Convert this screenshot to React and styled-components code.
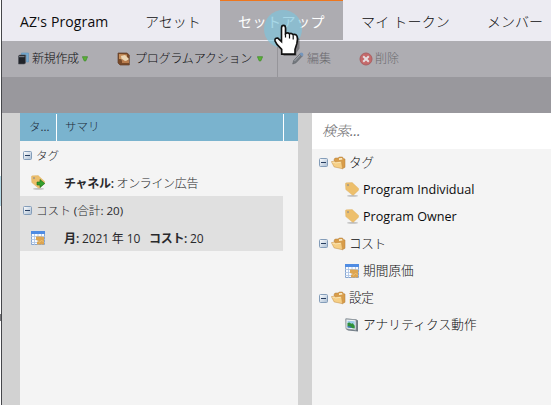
import React from "react";
import styled, { createGlobalStyle } from "styled-components";

const Global = createGlobalStyle`
  * { box-sizing: border-box; }
  body { margin: 0; overflow: hidden; background: #fff; }
  svg { display: block; flex: none; }
`;

const Page = styled.div`
  width: 551px;
  height: 405px;
  display: flex;
  font-family: "Open Sans", "Noto Sans CJK JP", sans-serif;
  color: #171719;
`;
const Edge = styled.div`
  flex: none;
  width: 2px;
  padding: 176px 0 0;
  border-right: 1px solid #46474b;
  background: #fff;
`;
const EdgeMark = styled.div`
  height: ${(p) => p.$h}px;
  margin-bottom: ${(p) => p.$gap || 0}px;
  background: ${(p) => p.$color};
`;
const Main = styled.div`
  width: 549px;
  display: flex;
  flex-direction: column;
`;
const Tabs = styled.nav`
  height: 41px;
  display: flex;
  background: #ecebf2;
`;
const Tab = styled.div`
  position: relative;
  flex: none;
  width: ${(p) => p.$w}px;
  height: 40px;
  padding: 2px 0 0 ${(p) => p.$pad || 18}px;
  line-height: 39px;
  font-size: 14px;
  white-space: nowrap;
  color: ${(p) => (p.$active ? "#fff" : "#0c0c0e")};
  background: ${(p) => (p.$active ? "#adacb1" : "transparent")};
  box-shadow: ${(p) => (p.$active ? "inset 0 1px #ee761d" : "none")};
`;
const Text = styled.span`
  letter-spacing: ${(p) => p.$ls || 0}px;
  font-weight: ${(p) => (p.$bold ? 600 : p.$light ? 300 : 400)};
  white-space: pre;
`;
const Pointer = styled.div`
  position: absolute;
  left: 43px;
  top: 9px;
  z-index: 2;
`;
const Toolbar = styled.div`
  height: 36px;
  display: flex;
  background: #aeadb2;
`;
const Tool = styled.div`
  flex: none;
  width: ${(p) => p.$w}px;
  height: 36px;
  padding: 0 0 1px ${(p) => p.$pad}px;
  display: flex;
  align-items: center;
  gap: ${(p) => p.$gap || 3}px;
  font-size: 12px;
  line-height: 18px;
  white-space: nowrap;
  color: ${(p) => (p.$off ? "#6c6b70" : "#0c0c0e")};
  border-left: ${(p) => (p.$rule ? "1px solid #96959a" : "0")};
`;
const Band = styled.div`
  height: 36px;
  background: #99989d;
`;
const Body = styled.div`
  flex: 1;
  display: flex;
  padding-left: 18px;
  background: #d2d2d2;
`;
const Summary = styled.section`
  width: 278px;
  margin-right: 14px;
  background: #f4f4f4;
`;
const Head = styled.div`
  height: 28px;
  display: flex;
  align-items: stretch;
  padding-top: 1px;
  background: #7ab3ce;
  font-size: 11.5px;
  line-height: 26px;
  color: #1d2c3a;
`;
const HeadCell = styled.div`
  width: ${(p) => p.$w}px;
  padding-left: ${(p) => p.$pad}px;
  border-right: 1px solid #fff;
  white-space: nowrap;
`;
const Group = styled.div`
  width: 263px;
  height: ${(p) => p.$h}px;
  background: ${(p) => (p.$shade ? "#e0e0e0" : "#f4f4f4")};
`;
const GroupRow = styled.div`
  height: ${(p) => p.$h}px;
  padding-left: 3px;
  display: flex;
  align-items: center;
  gap: 4px;
  font-size: 11.6px;
  color: #29292d;
`;
const Item = styled.div`
  height: 27px;
  padding-left: 11px;
  display: flex;
  align-items: center;
  font-size: 12px;
`;
const ItemText = styled.div`
  margin-left: 19px;
  white-space: pre;
  color: #29292c;
`;
const Palette = styled.section`
  flex: 1;
  background: #f4f4f4;
`;
const Search = styled.div`
  height: 36px;
  padding-left: 10px;
  line-height: 36px;
  background: #fff;
  font-size: 14px;
  font-style: italic;
  color: #6a6a6d;
`;
const Node = styled.div`
  height: 27.1px;
  padding-left: ${(p) => (p.$leaf ? 33 : 7)}px;
  display: flex;
  align-items: center;
  font-size: 12.6px;
  line-height: 20px;
  white-space: nowrap;
  color: #0c0c0e;
  svg + svg { margin-left: 3px; }
  span { margin-left: ${(p) => (p.$leaf ? 4 : 3)}px; }
`;

const Toggle = () => (
  <svg width="9" height="9" viewBox="0 0 9 9">
    <defs>
      <linearGradient id="tog" x1="0" y1="0" x2="1" y2="1">
        <stop offset="0" stopColor="#fff" /><stop offset="1" stopColor="#a9bdd3" />
      </linearGradient>
    </defs>
    <rect x=".5" y=".5" width="8" height="8" rx="1" fill="url(#tog)" stroke="#849db9" />
    <path d="M2 4.5h5" stroke="#273e60" />
  </svg>
);
const Folder = () => (
  <svg width="15" height="14" viewBox="0 0 15 14">
    <path d="M3.2 5V3l1-1h3l1-1h3.3l.8 1.5 1.7.5v8.3l-2.6 1.4z" fill="#d99d49" stroke="#b07c3c" strokeWidth=".5" />
    <path d="m8 2.3 3-.4.5 1.6-3.5.5z" fill="#fbeecb" />
    <path d="M.4 5.6 3.6 5.2l.8.9 6-.8 1.1 7.4-8.4-1.8z" fill="#f6cf85" stroke="#c28f48" strokeWidth=".5" />
    <path d="m1.4 6.4 2-.2.8.8 5.4-.7" stroke="#fdebc0" strokeWidth=".8" fill="none" />
  </svg>
);
const TagIcon = ({ arrow }) => (
  <svg width="14" height="15" viewBox="0 0 14 15">
    <ellipse cx="7.5" cy="13.9" rx="5.5" ry=".8" fill="#999" opacity=".6" />
    <path d="M.4 2Q.4.8 1.6.8L7.2.6l6.4 5.8v1.8L8.4 13.2 7 12.8.8 7.6z" fill="#edbf6c" stroke="#dcae60" strokeWidth=".4" />
    <circle cx="3" cy="3.1" r="1.1" fill="#a99c84" />
    {arrow && <path d="M6 7h3V4.5l4.8 4L9 12.5V10H6z" fill="#36a12e" stroke="#17691b" strokeWidth=".6" />}
  </svg>
);
const Calendar = () => (
  <svg width="14" height="14" viewBox="0 0 14 14">
    <path d="M.5.5h13v13H.5z" fill="#f8fbff" stroke="#86a5d0" />
    <path d="M0 0h14v3H0z" fill="#4f8ce3" />
    <path d="M3.5 3v11M7 3v11M10.5 3v11M0 5.5h14M0 8.5h14M0 11.5h14" stroke="#a9c2e2" strokeWidth=".8" />
    <path d="M5 5.5h5L13 6v7.5H6V11l2-1-3-1z" fill="#dda550" />
    <path d="m8 11.5 2.5-2 2 1" stroke="#f0c87f" fill="none" strokeWidth=".8" />
  </svg>
);
const Picture = () => (
  <svg width="14" height="14" viewBox="0 0 14 14">
    <path d="M.5.5 11 1.2l2 1.3v11L3 12.5l-2-1.5z" fill="#6f7a84" />
    <path d="m1 1 10 .8v10.4L1 10.8z" fill="#f0f3f3" stroke="#8b949b" strokeWidth=".8" />
    <path d="m2.5 2.7 7.2.6v7.2l-7.2-1z" fill="#9ccbe8" />
    <path d="m2.5 5 2-.6 1.8 1.4 1.4-.5 2 2.4v2.8l-3-.5-4.2-2z" fill="#2f9138" />
    <path d="m2.5 8 3 .3 1.5 1.8-4.5-.6z" fill="#3b77ab" />
  </svg>
);
const NewIcon = () => (
  <svg width="11" height="13" viewBox="0 0 11 13">
    <path d="M3.5 1h7v9h-2V3h-5z" fill="#77aad0" stroke="#5f94ba" strokeWidth=".6" />
    <path d="m.5 4 1-1h6v8l-1 1h-6z" fill="#202329" stroke="#51545a" strokeWidth=".6" />
    <path d="M1 4h5.5v1.2H1z" fill="#737981" />
  </svg>
);
const ProgramIcon = () => (
  <svg width="13" height="14" viewBox="0 0 13 14">
    <path d="M1 1h9l2.3 2v10H3L1 11z" fill="#794a29" stroke="#63402b" strokeWidth=".7" />
    <path d="m2 2 8 .5v5L2 7z" fill="#c8905c" />
    <path d="m4 4 4-1 4 4-3 3-4-1z" fill="#ead5b4" />
    <path d="m5 7 3 2 4-1v3H5z" fill="#b97d4e" />
  </svg>
);
const Caret = () => (
  <svg width="6" height="6" viewBox="0 0 6 6">
    <path d="M.4.7h5.2L3.7 5H2.3z" fill="#5cb136" stroke="#3c8a2a" strokeWidth=".7" />
  </svg>
);
const Pencil = () => (
  <svg width="12" height="13" viewBox="0 0 12 13">
    <path d="m.7 12 1-3.5L8.2 1.5l2.3 2.3-6.5 7z" fill="#75797f" stroke="#5b6066" strokeWidth=".6" />
    <path d="m7.5 2 1.4-1.4q2.5 0 2.6 2.4L10 4.5z" fill="#7496bd" />
    <path d="m2.5 9 5.5-6" stroke="#a4a9b0" />
  </svg>
);
const DeleteIcon = () => (
  <svg width="14" height="14" viewBox="0 0 14 14">
    <circle cx="7" cy="7" r="6" fill="#c5696a" stroke="#a96063" />
    <path d="m4.2 4.2 5.6 5.6m0-5.6L4.2 9.8" stroke="#e5dddf" strokeWidth="2" />
  </svg>
);
const Cursor = () => (
  <svg width="42" height="52" viewBox="0 0 42 52">
    <circle cx="20" cy="20" r="19" fill="#7dc4dc" opacity=".68" />
    <g transform="translate(0 -1.2) scale(1 1.06)">
      <path transform="translate(1.5 1.5)" opacity=".3" d="M18 19q0-3 2-3t2 3v6h9l4 3v9l-3 4v3H19v-4l-7-9q0-3 3-2l3 3z" />
      <path d="M18.5 19q0-2.5 2-2.5t2 2.5v5.3q2-1.5 4 .2 2-1 3.5.8 2.8-.8 4 1.5 1.2 2.5-.2 7.2l-1.8 5.2v4.5H18.7v-4.5L14 34.5l-2-3.2q-.5-3 2.8-2.8l3.7 3.3z" fill="#fff" stroke="#111" strokeWidth="1.6" />
      <path d="M22.5 24v4m4-3.5V29m3.7-3.2V30" stroke="#111" strokeWidth="1.2" />
    </g>
  </svg>
);

const nodes = [
  { label: "タグ", ls: -0.2 },
  { label: "Program Individual", Icon: TagIcon, ls: 0, latin: true },
  { label: "Program Owner", Icon: TagIcon, ls: 0, latin: true },
  { label: "コスト", ls: -0.3 },
  { label: "期間原価", Icon: Calendar, ls: 0.1 },
  { label: "設定", ls: -0.3 },
  { label: "アナリティクス動作", Icon: Picture, ls: 0.2 },
];

export default function App() {
  return (
    <Page>
      <Global />
      <Edge>
        <EdgeMark $h={30} $gap={108} $color="#b8dbe8" />
        <EdgeMark $h={7} $color="#77777a" />
      </Edge>
      <Main>
        <Tabs>
          <Tab $w={125}><Text $ls={0.13}>AZ's Program</Text></Tab>
          <Tab $w={93}><Text $light>アセット</Text></Tab>
          <Tab $w={123} $active>
            <Text $ls={0.5}>セットアップ</Text>
            <Pointer><Cursor /></Pointer>
          </Tab>
          <Tab $w={126}><Text $light $ls={0.2}>マイ トークン</Text></Tab>
          <Tab $w={82}><Text $light>メンバー</Text></Tab>
        </Tabs>
        <Toolbar>
          <Tool $w={98} $pad={16}>
            <NewIcon /><Text $light $ls={-0.3}>新規作成</Text><Caret />
          </Tool>
          <Tool $w={177} $pad={17} $gap={5}>
            <ProgramIcon /><Text $light $ls={-0.2}>プログラムアクション</Text><Caret />
          </Tool>
          <Tool $w={71} $pad={14} $off $rule><Pencil /><Text $light>編集</Text></Tool>
          <Tool $w={100} $pad={11} $gap={2} $off><DeleteIcon /><Text $light>削除</Text></Tool>
        </Toolbar>
        <Band />
        <Body>
          <Summary>
            <Head>
              <HeadCell $w={37} $pad={9}><Text $light>タ</Text>...</HeadCell>
              <HeadCell $w={227} $pad={8}><Text $light>サマリ</Text></HeadCell>
            </Head>
            <Group $h={55}>
              <GroupRow $h={28}><Toggle /><Text $light>タグ</Text></GroupRow>
              <Item>
                <TagIcon arrow />
                <ItemText><Text $bold $ls={-0.3}>チャネル: </Text><Text $light $ls={-0.35}>オンライン広告</Text></ItemText>
              </Item>
            </Group>
            <Group $h={55} $shade>
              <GroupRow $h={28}><Toggle /><Text><Text $light>コスト</Text> (<Text $light>合計</Text>: 20)</Text></GroupRow>
              <Item>
                <Calendar />
                <ItemText><Text $bold $ls={-0.1}>月:</Text><Text $ls={-0.15}> 2021 年 10   </Text><Text $bold $ls={-0.3}>コスト:</Text><Text $ls={-0.2}> 20</Text></ItemText>
              </Item>
            </Group>
          </Summary>
          <Palette>
            <Search><Text $light>検索</Text>...</Search>
            {nodes.map(({ label, Icon, ls, latin }) => (
              <Node key={label} $leaf={!!Icon}>
                {Icon ? <Icon /> : <><Toggle /><Folder /></>}
                <Text $ls={ls} $light={!latin}>{label}</Text>
              </Node>
            ))}
          </Palette>
        </Body>
      </Main>
    </Page>
  );
}
